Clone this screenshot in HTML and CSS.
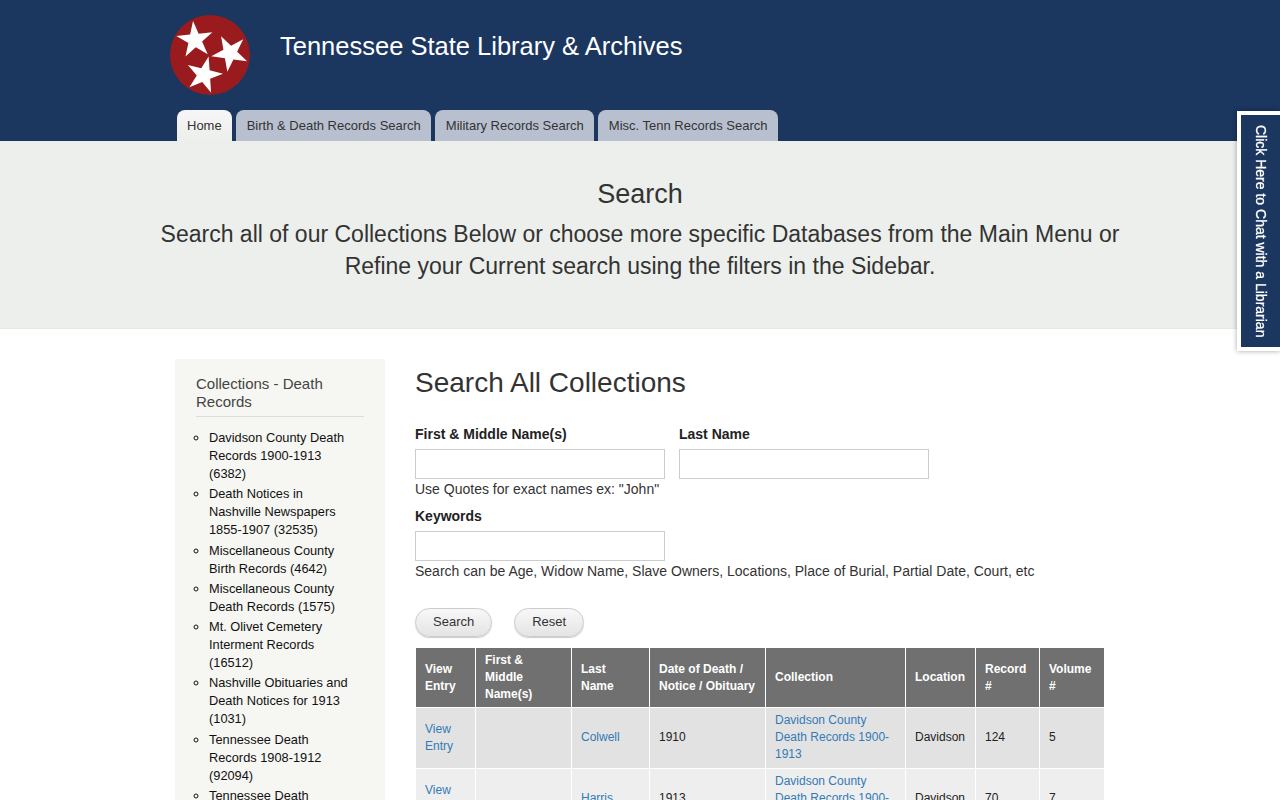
FILE: index.html
```html
<!DOCTYPE html>
<html lang="en">
<head>
    <meta charset="UTF-8">
    <meta name="viewport" content="width=device-width, initial-scale=1.0">
    <title>Tennessee State Library &amp; Archives</title>
    <link rel="stylesheet" href="styles.css">
</head>
<body>
    <header class="site_header">
        <div class="branding">
            <svg class="logo" width="80" height="80" viewBox="0 0 80 80" aria-label="Tennessee tri-star logo">
                <defs>
                    <polygon id="star" points="0,-19 4.3,-5.9 18.1,-5.9 6.9,2.2 11.2,15.4 0,7.3 -11.2,15.4 -6.9,2.2 -18.1,-5.9 -4.3,-5.9"/>
                </defs>
                <ellipse cx="40" cy="40" rx="40" ry="40" fill="#991b1e"/>
                <use href="#star" fill="#fff" transform="translate(25 25) rotate(-6)"/>
                <use href="#star" fill="#fff" transform="translate(60 38) rotate(-28)"/>
                <use href="#star" fill="#fff" transform="translate(34 60) rotate(14)"/>
            </svg>
            <div class="site_title">Tennessee State Library &amp; Archives</div>
        </div>
        <nav class="tabs">
            <a class="tab active" href="#">Home</a>
            <a class="tab" href="#">Birth &amp; Death Records Search</a>
            <a class="tab" href="#">Military Records Search</a>
            <a class="tab" href="#">Misc. Tenn Records Search</a>
        </nav>
    </header>

    <section class="hero">
        <h1>Search</h1>
        <p>Search all of our Collections Below or choose more specific Databases from the Main Menu or<br>Refine your Current search using the filters in the Sidebar.</p>
    </section>

    <div class="content">
        <aside class="sidebar">
            <h2>Collections - Death Records</h2>
            <ul>
                <li>Davidson County Death Records 1900-1913 (6382)</li>
                <li>Death Notices in Nashville Newspapers 1855-1907 (32535)</li>
                <li>Miscellaneous County Birth Records (4642)</li>
                <li>Miscellaneous County Death Records (1575)</li>
                <li>Mt. Olivet Cemetery Interment Records (16512)</li>
                <li>Nashville Obituaries and Death Notices for 1913 (1031)</li>
                <li>Tennessee Death Records 1908-1912 (92094)</li>
                <li>Tennessee Death</li>
            </ul>
        </aside>

        <main class="main">
            <h2>Search All Collections</h2>
            <form class="search_form">
                <div class="field_row">
                    <div class="field">
                        <label for="first">First &amp; Middle Name(s)</label>
                        <input id="first" type="text">
                    </div>
                    <div class="field">
                        <label for="last">Last Name</label>
                        <input id="last" type="text">
                    </div>
                </div>
                <div class="hint">Use Quotes for exact names ex: "John"</div>
                <div class="field keywords">
                    <label for="keywords">Keywords</label>
                    <input id="keywords" type="text">
                </div>
                <div class="hint">Search can be Age, Widow Name, Slave Owners, Locations, Place of Burial, Partial Date, Court, etc</div>
                <div class="buttons">
                    <button type="button" class="btn">Search</button>
                    <button type="button" class="btn">Reset</button>
                </div>
            </form>

            <table class="results">
                <colgroup>
                    <col class="c1"><col class="c2"><col class="c3"><col class="c4"><col class="c5"><col class="c6"><col class="c7"><col class="c8">
                </colgroup>
                <thead>
                    <tr>
                        <th>View Entry</th>
                        <th>First &amp; Middle Name(s)</th>
                        <th>Last Name</th>
                        <th>Date of Death / Notice / Obituary</th>
                        <th>Collection</th>
                        <th>Location</th>
                        <th>Record #</th>
                        <th>Volume #</th>
                    </tr>
                </thead>
                <tbody>
                    <tr>
                        <td><a href="#">View Entry</a></td>
                        <td></td>
                        <td><a href="#">Colwell</a></td>
                        <td>1910</td>
                        <td><a href="#">Davidson County Death Records 1900-1913</a></td>
                        <td>Davidson</td>
                        <td>124</td>
                        <td>5</td>
                    </tr>
                    <tr>
                        <td><a href="#">View Entry</a></td>
                        <td></td>
                        <td><a href="#">Harris</a></td>
                        <td>1913</td>
                        <td><a href="#">Davidson County Death Records 1900-1913</a></td>
                        <td>Davidson</td>
                        <td>70</td>
                        <td>7</td>
                    </tr>
                </tbody>
            </table>
        </main>
    </div>

    <a class="chat_tab" href="#">Click Here to Chat with a Librarian</a>
</body>
</html>
```

FILE: styles.css
```css
html, body {
    height: 800px;
    overflow: hidden;
}

body {
    margin: 0;
    font-family: 'Liberation Sans', Arial, sans-serif;
    font-size: 14px;
    line-height: 18px;
    color: #333;
    background: #fff;
}

/* Header */
.site_header {
    background: #1b365f;
    height: 141px;
    display: flex;
    flex-direction: column;
    justify-content: space-between;
    padding-left: 170px;
    box-sizing: border-box;
}

.branding {
    display: flex;
    align-items: flex-start;
    padding-top: 15px;
}

.logo {
    flex: none;
}

.site_title {
    margin: 15px 0 0 30px;
    font-size: 25.5px;
    line-height: 32px;
    color: #fff;
}

.tabs {
    display: flex;
    gap: 4px;
    padding-left: 7px;
}

.tab {
    height: 31px;
    padding: 0 10px 0 11px;
    font-size: 13px;
    line-height: 31px;
    color: #333;
    text-decoration: none;
    background: #b8c0cf;
    border-radius: 8px 8px 0 0;
}

.tab.active {
    padding: 0 10px;
    background: linear-gradient(#f6f6f6, #ecefec);
}

/* Hero */
.hero {
    background: #ecefec;
    height: 188px;
    box-sizing: border-box;
    padding-top: 36px;
    text-align: center;
    border-bottom: 1px solid #e8e8e8;
}

.hero h1 {
    margin: 0;
    font-size: 27px;
    font-weight: 400;
    line-height: 34px;
}

.hero p {
    margin: 7px 0 0;
    font-size: 23px;
    line-height: 32px;
}

/* Two columns */
.content {
    display: flex;
    align-items: flex-start;
    padding: 30px 0 0 175px;
}

.sidebar {
    width: 210px;
    box-sizing: border-box;
    flex: none;
    padding: 16px 21px 20px;
    background: #f6f6f2;
}

.sidebar h2 {
    margin: 0 0 12px;
    padding-bottom: 5px;
    font-size: 15px;
    font-weight: 400;
    line-height: 18px;
    color: #444;
    border-bottom: 1px solid #ddd;
}

.sidebar ul {
    margin: 0;
    padding: 0 10px 0 13px;
    list-style: circle;
    font-size: 12.8px;
    line-height: 18.1px;
    color: #111;
}

.sidebar li {
    margin-bottom: 2px;
}

.main {
    width: 690px;
    margin-left: 30px;
}

.main h2 {
    margin: 8px 0 26px;
    font-size: 28px;
    font-weight: 400;
    line-height: 32px;
}

/* Search form */
.field_row {
    display: flex;
    gap: 14px;
}

.field label {
    display: block;
    margin-bottom: 6px;
    font-weight: 700;
    color: #222;
}

.field input {
    display: block;
    width: 250px;
    height: 30px;
    box-sizing: border-box;
    border: 1px solid #ccc;
    background: #fff;
}

.hint {
    margin-top: 1px;
}

.keywords {
    margin-top: 9px;
}

.buttons {
    display: flex;
    gap: 22px;
    margin-top: 28px;
}

.btn {
    height: 29px;
    padding: 0 17px 2px;
    font-family: inherit;
    font-size: 13px;
    color: #333;
    background: linear-gradient(#f8f8f8, #e4e4e4);
    border: 1px solid #ccc;
    border-radius: 15px;
    box-shadow: 0 1px 1px rgba(0, 0, 0, 0.2);
}

/* Results table */
.results {
    width: 689px;
    margin-top: 10px;
    border-collapse: collapse;
    table-layout: fixed;
    font-size: 12px;
    line-height: 17px;
}

.c1 { width: 60px; }
.c2 { width: 96px; }
.c3 { width: 78px; }
.c4 { width: 116px; }
.c5 { width: 140px; }
.c6 { width: 70px; }
.c7 { width: 64px; }
.c8 { width: 65px; }

.results th,
.results td {
    padding: 4px 9px;
    border: 1px solid #fff;
    text-align: left;
    vertical-align: middle;
}

.results th {
    background: #707070;
    color: #fff;
}

.results td {
    padding-top: 3px;
    padding-bottom: 3px;
    height: 54px;
    color: #222;
}

.results tbody tr:first-child td {
    height: 53.6px;
}

.results tbody tr:nth-child(odd) td {
    background: #e2e2e2;
}

.results tbody tr:nth-child(even) td {
    background: #eee;
}

.results a {
    color: #337ab7;
    text-decoration: none;
}

/* Chat tab on the right edge */
.chat_tab {
    position: fixed;
    top: 111px;
    right: 0;
    width: 39px;
    height: 232px;
    border: 4px solid #fff;
    border-right: 0;
    background: #1b365f;
    color: #fff;
    font-size: 14px;
    line-height: 39px;
    text-align: center;
    text-decoration: none;
    writing-mode: vertical-rl;
    -webkit-text-stroke: 0.3px #fff;
    box-shadow: 0 0 5px rgba(0, 0, 0, 0.35);
}
```
